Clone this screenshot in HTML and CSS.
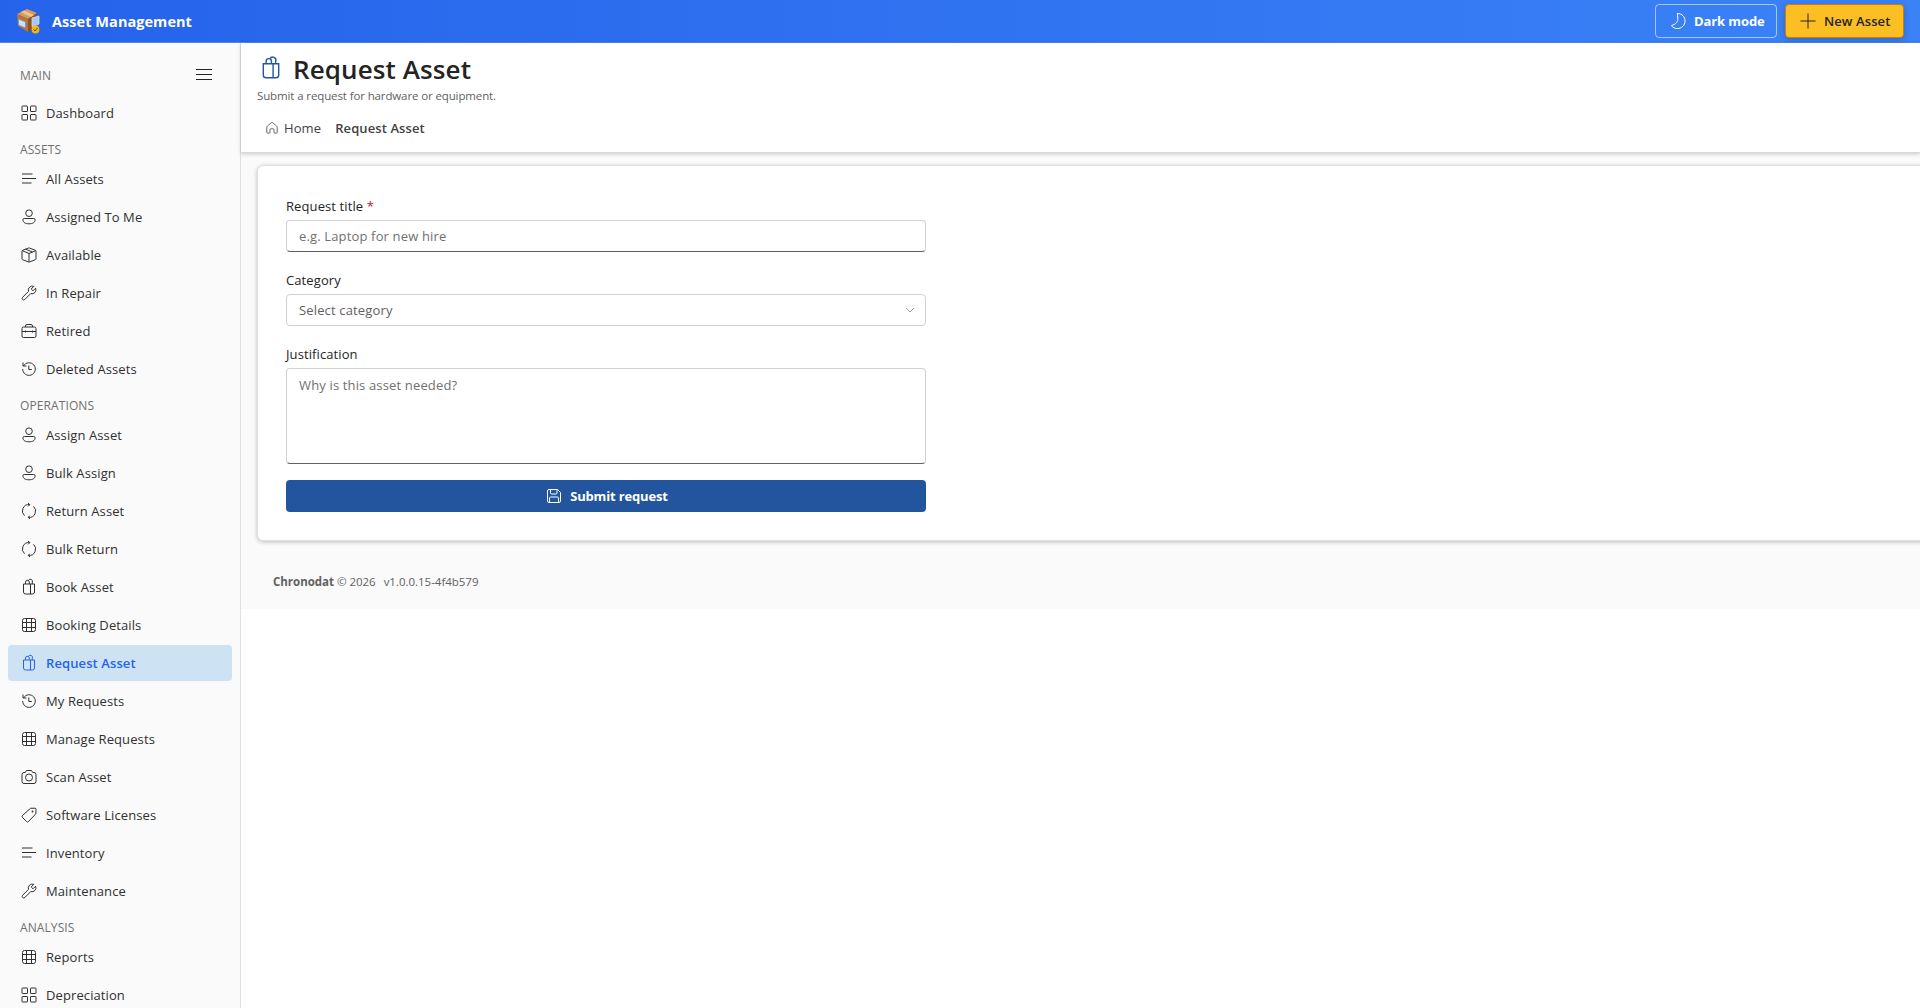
FILE: index.html
```html
<!DOCTYPE html>
<html lang="en">
  <head>
    <meta charset="UTF-8" />
    <meta name="viewport" content="width=device-width, initial-scale=1.0" />
    <title>Request Asset - Asset Management</title>
    <link rel="stylesheet" href="styles.css">
  </head>
  <body>
    <svg class="sprite" aria-hidden="true">
      <symbol id="i-grid" viewBox="0 0 20 20"><rect x="3" y="3" width="5.500" height="5.500" rx=".5" /><rect x="11.500" y="3" width="5.500" height="5.500" rx=".5" /><rect x="3" y="11.500" width="5.500" height="5.500" rx=".5" /><rect x="11.500" y="11.500" width="5.500" height="5.500" rx=".5" /></symbol>
      <symbol id="i-list" viewBox="0 0 20 20"><path d="M3 5h10.500M3 9.500h14M3 14h9.500" /></symbol>
      <symbol id="i-person" viewBox="0 0 20 20"><circle cx="10" cy="6.200" r="3.300" /><path d="M5.300 11.500h9.400a1.400 1.400 0 0 1 1.400 1.400c0 2.700-2.700 3.900-6.100 3.900s-6.100-1.200-6.100-3.900A1.400 1.400 0 0 1 5.300 11.500Z" /></symbol>
      <symbol id="i-box" viewBox="0 0 20 20"><path d="M9.300 3.100 3.600 5.300c-.4.200-.6.500-.6.900v7.600c0 .4.200.8.600.9l5.700 2.200c.5.200.9.200 1.400 0l5.700-2.200c.4-.1.600-.5.600-.9V6.200c0-.4-.2-.7-.6-.9l-5.700-2.200a2 2 0 0 0-1.400 0ZM3.200 5.700 10 8.500l6.800-2.800M10 8.500V17M6.500 4.200l7 2.800" /></symbol>
      <symbol id="i-wrench" viewBox="0 0 20 20"><path d="M16.600 5.200 14 7.800 12.200 6l2.600-2.600a4 4 0 0 0-5.300 5L3.600 14.300a1.500 1.500 0 0 0 2.200 2.200l5.900-5.900a4 4 0 0 0 4.900-5.400Z" /></symbol>
      <symbol id="i-case" viewBox="0 0 20 20"><rect x="3" y="6" width="14" height="10.500" rx="1.500" /><path d="M6.500 6V5A1.500 1.500 0 0 1 8 3.500h4A1.500 1.500 0 0 1 13.500 5v1M3 10.500h14M6.500 9.500v2M13.500 9.500v2" /></symbol>
      <symbol id="i-history" viewBox="0 0 20 20"><path d="M4.500 7a6.300 6.300 0 1 1-.8 3M4 3.500V7h3.500M9.800 6.500V10.500h3" /></symbol>
      <symbol id="i-sync" viewBox="0 0 20 20"><path d="M10.500 3.600A6.400 6.400 0 0 0 5.500 14.700M9.500 16.400A6.400 6.400 0 0 0 14.500 5.300M9 2l1.800 1.600L9.200 5.300M11 18l-1.800-1.600 1.600-1.700" /></symbol>
      <symbol id="i-bag" viewBox="0 0 20 20"><path d="M4.500 7h11v8a2 2 0 0 1-2 2h-7a2 2 0 0 1-2-2ZM11.500 7v10M6.500 7V5.200a1.900 1.900 0 0 1 3.800 0V7M9.300 3.600a1.900 1.900 0 0 1 4 1.600V7" /></symbol>
      <symbol id="i-table" viewBox="0 0 20 20"><rect x="3.500" y="3.500" width="13" height="13" rx="2" /><path d="M7.500 3.500v13M12.500 3.500v13M3.500 7.500h13M3.500 12.500h13" /></symbol>
      <symbol id="i-camera" viewBox="0 0 20 20"><path d="M7.500 3.500h5l1.200 2H15a2 2 0 0 1 2 2v7a2 2 0 0 1-2 2H5a2 2 0 0 1-2-2v-7a2 2 0 0 1 2-2h1.300Z" /><circle cx="10" cy="10.500" r="3.500" /></symbol>
      <symbol id="i-tag" viewBox="0 0 20 20"><path d="M11.500 3.300 16 3.200a1 1 0 0 1 1 1l-.2 4.600-7.300 7.700a1.500 1.500 0 0 1-2 0l-4-4a1.500 1.500 0 0 1 0-2Z" /><circle class="dot" cx="13.500" cy="6.500" r=".9" /></symbol>
      <symbol id="i-menu" viewBox="0 0 20 20"><path d="M2 4.500h16M2 9.500h16M2 14.500h16" /></symbol>
      <symbol id="i-home" viewBox="0 0 20 20"><path d="M9.300 3.200 4.200 7.600c-.5.400-.7.900-.7 1.500V15.500a1 1 0 0 0 1 1h2a1 1 0 0 0 1-1V12a1 1 0 0 1 1-1h3a1 1 0 0 1 1 1v3.500a1 1 0 0 0 1 1h2a1 1 0 0 0 1-1V9.100c0-.6-.2-1.100-.7-1.500l-5.100-4.400a1 1 0 0 0-1.400 0Z" /></symbol>
      <symbol id="i-moon" viewBox="0 0 20 20"><path d="M9.300 2.500c5 0 7.700 3.400 7.700 7.500 0 4.400-3.400 7.500-7.600 7.500-2.700 0-4.700-1-5.900-2.900 4.500-1.500 6.600-3.600 6.300-7.600 0-1.800-.5-3-.5-4.500Z" /></symbol>
      <symbol id="i-plus" viewBox="0 0 20 20"><path d="M10 2.500v15M2.500 10h15" /></symbol>
      <symbol id="i-save" viewBox="0 0 20 20"><path d="M5 3.500h8.500l3 3V15a1.500 1.500 0 0 1-1.500 1.500H5A1.500 1.500 0 0 1 3.500 15V5A1.500 1.500 0 0 1 5 3.500ZM6.500 3.500V7a1 1 0 0 0 1 1H12a1 1 0 0 0 1-1V3.500M5.500 16.500V12a1 1 0 0 1 1-1h7a1 1 0 0 1 1 1v4.500" /></symbol>
      <symbol id="i-chevron" viewBox="0 0 20 20"><path d="M5 7.500 10 12.500 15 7.500" /></symbol>
    </svg>

    <header class="topbar">
      <div class="brand">
        <svg class="logo" viewBox="0 0 24 26">
          <path fill="#d79a5b" d="M1 6 11 1l10 4-9 6Z" />
          <path fill="#b87539" d="M1 6l11 5v13L2 18Z" />
          <path fill="#8a5228" d="M12 11l9-6v13l-9 6Z" />
          <path fill="#f0c48d" d="m5 4 3-1.500 10 4.500-3 2Z" />
          <path fill="#cfe0f7" stroke="#6f8fc0" stroke-width=".7" d="m2.500 11 7 3v6l-7-3Z" />
          <path fill="#a9c7f5" stroke="#dbe8fb" stroke-width=".7" d="m16 10 7-2v8l-7 3Z" />
          <circle cx="19.500" cy="21.500" r="3.900" fill="#f5b70c" />
          <path fill="none" stroke="#5b4308" stroke-width="1" d="m17.700 21.500 1.300 1.500 2.500-3" />
        </svg>
        <span class="brand-name">Asset Management</span>
      </div>
      <div class="topbar-actions">
        <button class="btn btn-outline"><svg class="icon"><use href="#i-moon" /></svg><span>Dark mode</span></button>
        <button class="btn btn-new"><svg class="icon"><use href="#i-plus" /></svg><span>New Asset</span></button>
      </div>
    </header>

    <div class="layout">
      <nav class="sidebar">
        <div class="nav-top">
          <span class="nav-label">MAIN</span>
          <svg class="icon menu-icon"><use href="#i-menu" /></svg>
        </div>
        <a class="nav-item"><svg class="icon"><use href="#i-grid" /></svg>Dashboard</a>

        <div class="nav-heading">ASSETS</div>
        <a class="nav-item"><svg class="icon"><use href="#i-list" /></svg>All Assets</a>
        <a class="nav-item"><svg class="icon"><use href="#i-person" /></svg>Assigned To Me</a>
        <a class="nav-item"><svg class="icon"><use href="#i-box" /></svg>Available</a>
        <a class="nav-item"><svg class="icon"><use href="#i-wrench" /></svg>In Repair</a>
        <a class="nav-item"><svg class="icon"><use href="#i-case" /></svg>Retired</a>
        <a class="nav-item"><svg class="icon"><use href="#i-history" /></svg>Deleted Assets</a>

        <div class="nav-heading">OPERATIONS</div>
        <a class="nav-item"><svg class="icon"><use href="#i-person" /></svg>Assign Asset</a>
        <a class="nav-item"><svg class="icon"><use href="#i-person" /></svg>Bulk Assign</a>
        <a class="nav-item"><svg class="icon"><use href="#i-sync" /></svg>Return Asset</a>
        <a class="nav-item"><svg class="icon"><use href="#i-sync" /></svg>Bulk Return</a>
        <a class="nav-item"><svg class="icon"><use href="#i-bag" /></svg>Book Asset</a>
        <a class="nav-item"><svg class="icon"><use href="#i-table" /></svg>Booking Details</a>
        <a class="nav-item active"><svg class="icon"><use href="#i-bag" /></svg>Request Asset</a>
        <a class="nav-item"><svg class="icon"><use href="#i-history" /></svg>My Requests</a>
        <a class="nav-item"><svg class="icon"><use href="#i-table" /></svg>Manage Requests</a>
        <a class="nav-item"><svg class="icon"><use href="#i-camera" /></svg>Scan Asset</a>
        <a class="nav-item"><svg class="icon"><use href="#i-tag" /></svg>Software Licenses</a>
        <a class="nav-item"><svg class="icon"><use href="#i-list" /></svg>Inventory</a>
        <a class="nav-item"><svg class="icon"><use href="#i-wrench" /></svg>Maintenance</a>

        <div class="nav-heading">ANALYSIS</div>
        <a class="nav-item"><svg class="icon"><use href="#i-table" /></svg>Reports</a>
        <a class="nav-item"><svg class="icon"><use href="#i-grid" /></svg>Depreciation</a>
      </nav>

      <main class="main">
        <div class="page-header">
          <h1 class="page-title"><svg class="title-icon"><use href="#i-bag" /></svg><span>Request Asset</span></h1>
          <p class="page-subtitle">Submit a request for hardware or equipment.</p>
          <div class="breadcrumb">
            <svg class="home-icon"><use href="#i-home" /></svg>
            <span class="crumb">Home</span>
            <span class="crumb-current">Request Asset</span>
          </div>
        </div>

        <div class="content">
          <div class="card">
            <form class="form">
              <label class="label" for="title">Request title <span class="required">*</span></label>
              <input class="field" type="text" id="title" placeholder="e.g. Laptop for new hire" />

              <label class="label" for="category">Category</label>
              <button class="select" type="button" id="category">
                <span>Select category</span>
                <svg class="chevron"><use href="#i-chevron" /></svg>
              </button>

              <label class="label" for="reason">Justification</label>
              <textarea class="field area" id="reason" placeholder="Why is this asset needed?"></textarea>

              <button class="submit" type="button"><svg class="icon"><use href="#i-save" /></svg><span>Submit request</span></button>
            </form>
          </div>
          <footer class="footer"><b>Chronodat</b> © 2026 <span class="version">v1.0.0.15-4f4b579</span></footer>
        </div>
      </main>
    </div>
  </body>
</html>
```
FILE: styles.css
```css
* {
  box-sizing: border-box;
}
body {
  margin: 0;
  height: 100vh;
  overflow: hidden;
  font-family: 'Open Sans', 'Noto Sans', sans-serif;
  font-size: 13px;
  letter-spacing: 0.1px;
  color: #242424;
  background: #fff;
}
button,
input,
textarea {
  font: inherit;
  letter-spacing: inherit;
}
.sprite {
  display: none;
}
svg {
  fill: none;
  stroke: currentColor;
  flex-shrink: 0;
}
.logo {
  stroke: none;
  width: 24px;
  height: 26px;
}
.dot {
  fill: currentColor;
  stroke: none;
}
.icon {
  width: 20px;
  height: 20px;
}

/* top bar */
.topbar {
  height: 43px;
  display: flex;
  align-items: center;
  justify-content: space-between;
  padding: 0 16px 1px;
  background: linear-gradient(90deg, #2563eb, #3b82f6);
  border-bottom: 1px solid #4a86f5;
}
.brand {
  display: flex;
  align-items: center;
  gap: 12px;
  color: #fff;
  font-size: 14.5px;
  font-weight: 700;
  letter-spacing: 0.05px;
}
.brand-name {
  padding-top: 1px;
}
.topbar-actions {
  display: flex;
  gap: 8px;
}
.btn {
  height: 34px;
  display: flex;
  align-items: center;
  gap: 6px;
  padding: 0 11px 0 12px;
  border-radius: 4px;
  font-weight: 700;
  white-space: nowrap;
}
.btn-outline {
  width: 122px;
  color: #fff;
  letter-spacing: -0.1px;
  background: transparent;
  border: 1px solid rgba(255, 255, 255, 0.55);
}
.btn-new {
  width: 119px;
  color: #242424;
  font-weight: 600;
  background: #fbbf24;
  border: 1px solid #d97706;
  box-shadow: 0 2px 6px rgba(0, 0, 0, 0.2);
}

/* sidebar */
.layout {
  display: flex;
  height: calc(100vh - 43px);
}
.sidebar {
  width: 241px;
  flex-shrink: 0;
  padding: 12px 8px 0;
  background: #fafafa;
  border-right: 1px solid #e0e0e0;
  overflow: hidden;
}
.nav-top {
  height: 40px;
  display: flex;
  align-items: center;
  justify-content: space-between;
  padding: 0 18px 0 12px;
}
.nav-label,
.nav-heading {
  font-size: 12px;
  color: #707070;
}
.nav-heading {
  height: 28px;
  line-height: 16px;
  padding: 9px 12px 0;
}
.nav-item {
  height: 36px;
  display: flex;
  align-items: center;
  gap: 7px;
  margin-bottom: 2px;
  padding-left: 11px;
  border-radius: 4px;
  color: #303030;
}
.nav-item.active {
  background: #cde2f3;
  color: #2563eb;
  font-weight: 600;
}

/* main area */
.main {
  flex: 1;
  min-width: 0;
}
.page-header {
  position: relative;
  height: 110px;
  padding: 9px 16px 0;
  background: #fff;
  border-bottom: 1px solid #d8d8d8;
  box-shadow: 0 1px 4px rgba(0, 0, 0, 0.2);
}
.page-title {
  display: flex;
  align-items: center;
  gap: 8px;
  height: 34px;
  margin: 0;
  font-size: 26px;
  font-weight: 600;
  line-height: 32px;
}
.page-title span {
  padding-bottom: 1px;
}
.title-icon {
  width: 28px;
  height: 32px;
  padding-bottom: 2px;
  color: #2256a0;
}
.page-subtitle {
  margin: 2px 0 0;
  font-size: 11.5px;
  letter-spacing: -0.12px;
  line-height: 16px;
  color: #616161;
}
.breadcrumb {
  display: flex;
  align-items: center;
  height: 32px;
  margin-top: 8px;
  padding-left: 7px;
  color: #424242;
}
.home-icon {
  width: 16px;
  height: 16px;
  margin-right: 4px;
}
.crumb-current {
  margin-left: 14px;
  font-weight: 600;
}
.content {
  height: 456px;
  padding: 12px 0 0 16px;
  background: #fafafa;
  overflow: hidden;
}
.card {
  width: 1700px;
  height: 376px;
  padding: 28px;
  background: #fff;
  border: 1px solid #e0e0e0;
  border-radius: 6px;
  box-shadow: 0 1px 4px rgba(0, 0, 0, 0.24);
}
.form {
  width: 640px;
  display: flex;
  flex-direction: column;
}
.label {
  line-height: 20px;
  margin: 2px 0 4px;
}
.required {
  color: #c50f1f;
}
.field,
.select {
  width: 100%;
  height: 32px;
  margin-bottom: 16px;
  padding: 0 12px;
  background: #fff;
  border: 1px solid #d1d1d1;
  border-radius: 4px;
  color: #616161;
  letter-spacing: 0.15px;
}
.field {
  border-bottom-color: #616161;
}
.field::placeholder {
  color: #707070;
}
.area {
  height: 96px;
  padding: 7px 12px;
  resize: none;
}
.select {
  display: flex;
  align-items: center;
  justify-content: space-between;
  padding-right: 7px;
}
.chevron {
  width: 16px;
  height: 16px;
  color: #888;
}
.submit {
  height: 32px;
  display: flex;
  align-items: center;
  justify-content: center;
  gap: 6px;
  border: 0;
  border-radius: 4px;
  background: #22559d;
  color: #fff;
  font-weight: 700;
  letter-spacing: -0.15px;
}
.footer {
  padding: 32px 16px 0;
  font-size: 11.5px;
  letter-spacing: -0.02px;
  line-height: 18px;
  color: #616161;
}
.version {
  margin-left: 5px;
}
```
